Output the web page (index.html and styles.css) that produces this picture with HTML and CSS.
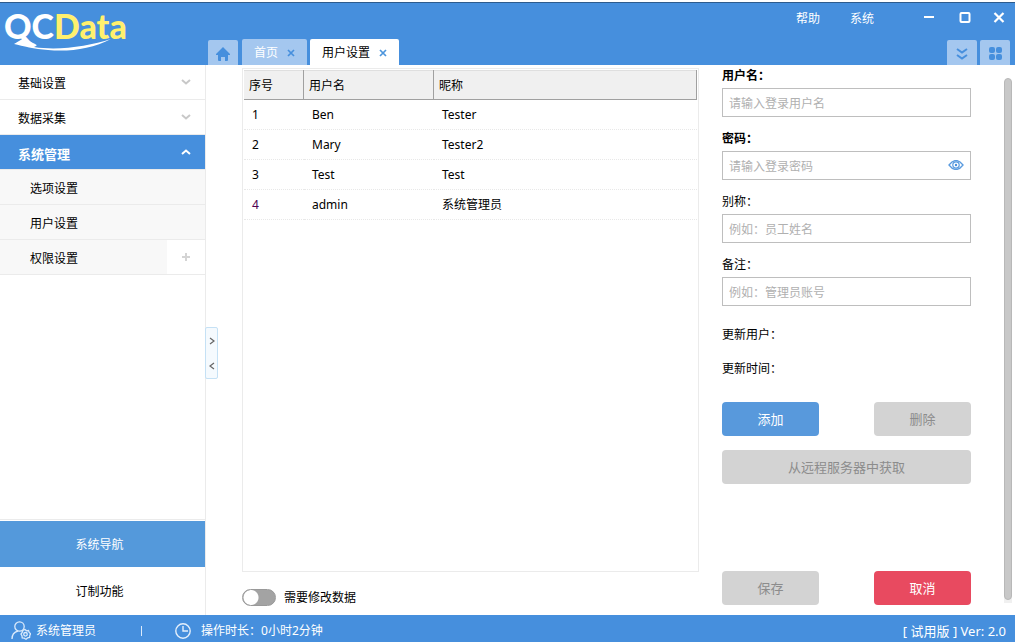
FILE: index.html
```html
<!DOCTYPE html>
<html lang="zh-CN">
<head>
<meta charset="utf-8">
<meta name="viewport" content="width=device-width, initial-scale=1">
<title>QCData</title>
<link rel="stylesheet" href="styles.css">
</head>
<body>
<div class="app">
  <header class="header">
    <div class="brand">
      <span class="brand-name">QC<span class="brand-data">Data</span></span>
      <svg class="brand-swoosh" width="98" height="13" viewBox="0 0 98 13" aria-hidden="true"><path d="M0 6 10 0l9 5c2 1 5 2 3 3l-2 1C45 13 75 8 97 1 78 11 55 14 34 12 20 11 9 8 0 6z" fill="#fff"/></svg>
    </div>
    <nav class="tabs">
      <button class="tab tab-home tab-first" type="button" aria-label="主页">
        <svg width="14" height="14" viewBox="0 0 14 14"><path d="M7 0 14 7v1h-2v5q0 1-1 1H9v-4H5v4H3q-1 0-1-1V8H0V7z" fill="#468fdd"/></svg>
      </button>
      <button class="tab tab-idle" type="button">首页
        <svg width="8" height="8" viewBox="0 0 8 8"><path d="M1 1 7 7M7 1 1 7" stroke="#468fdd" stroke-width="1.700"/></svg>
      </button>
      <button class="tab tab-active" type="button">用户设置
        <svg width="8" height="8" viewBox="0 0 8 8"><path d="M1 1 7 7M7 1 1 7" stroke="#4c95dd" stroke-width="1.700"/></svg>
      </button>
    </nav>
    <div class="header-right">
      <div class="window-bar">
        <button class="plain menu" type="button">帮助</button>
        <button class="plain menu" type="button">系统</button>
        <button class="plain minimize" type="button" aria-label="最小化"><svg width="12" height="12" viewBox="0 0 12 12"><path d="M1 5h10" stroke="#fff" stroke-width="2"/></svg></button>
        <button class="plain maximize" type="button" aria-label="最大化"><svg width="12" height="12" viewBox="0 0 12 12"><rect x="1.500" y="1" width="9" height="9" rx="1" fill="none" stroke="#fff" stroke-width="2"/></svg></button>
        <button class="plain close" type="button" aria-label="关闭"><svg width="12" height="12" viewBox="0 0 12 12"><path d="M1.500 1 10.500 10M10.500 1 1.500 10" stroke="#fff" stroke-width="2.200"/></svg></button>
      </div>
      <div class="tab-tools">
        <button class="tab tab-home" type="button" aria-label="展开"><svg width="12" height="12" viewBox="0 0 12 12"><path d="M1 1 6 4.500 11 1M1 7 6 10.500 11 7" fill="none" stroke="#468fdd" stroke-width="2"/></svg></button>
        <button class="tab tab-home" type="button" aria-label="窗口"><svg width="13" height="13" viewBox="0 0 13 13" fill="#468fdd"><rect width="6" height="6" rx="2"/><rect x="7" width="6" height="6" rx="2"/><rect y="7" width="6" height="6" rx="2"/><rect x="7" y="7" width="6" height="6" rx="2"/></svg></button>
      </div>
    </div>
  </header>

  <div class="body">
    <aside class="sidebar">
      <nav class="nav">
        <button class="nav-item" type="button">基础设置<svg class="chevron" width="10" height="6" viewBox="0 0 10 6"><path d="M1 1 5 4.500 9 1" fill="none" stroke="#c8c8c8" stroke-width="2"/></svg></button>
        <button class="nav-item" type="button">数据采集<svg class="chevron" width="10" height="6" viewBox="0 0 10 6"><path d="M1 1 5 4.500 9 1" fill="none" stroke="#c8c8c8" stroke-width="2"/></svg></button>
        <button class="nav-item nav-open" type="button">系统管理<svg class="chevron" width="10" height="6" viewBox="0 0 10 6"><path d="M1 5 5 1.500 9 5" fill="none" stroke="#fff" stroke-width="2"/></svg></button>
        <button class="nav-item nav-sub" type="button">选项设置</button>
        <button class="nav-item nav-sub" type="button">用户设置</button>
        <div class="nav-split">
          <button class="nav-item nav-sub" type="button">权限设置</button>
          <button class="plain nav-add" type="button" aria-label="添加"><svg width="8" height="8" viewBox="0 0 8 8"><path d="M4 0v8M0 4h8" stroke="#d4d4d4" stroke-width="2"/></svg></button>
        </div>
      </nav>
      <div class="switcher">
        <button class="switch-item switch-on" type="button">系统导航</button>
        <button class="switch-item" type="button">订制功能</button>
      </div>
      <div class="splitter">
        <svg width="6" height="8" viewBox="0 0 6 8"><path d="M1 1 5 4 1 7" fill="none" stroke="#666" stroke-width="1.200"/></svg>
        <svg width="6" height="8" viewBox="0 0 6 8"><path d="M5 1 1 4 5 7" fill="none" stroke="#666" stroke-width="1.200"/></svg>
      </div>
    </aside>

    <main class="list">
      <div class="grid-panel">
        <table class="grid">
          <colgroup><col class="col-no"><col class="col-user"><col></colgroup>
          <thead><tr><th>序号</th><th>用户名</th><th>昵称</th></tr></thead>
          <tbody>
            <tr><td>1</td><td>Ben</td><td>Tester</td></tr>
            <tr><td>2</td><td>Mary</td><td>Tester2</td></tr>
            <tr><td>3</td><td>Test</td><td>Test</td></tr>
            <tr><td class="current">4</td><td>admin</td><td>系统管理员</td></tr>
          </tbody>
        </table>
      </div>
      <label class="toggle"><input class="toggle-box" type="checkbox"><span class="toggle-text">需要修改数据</span></label>
    </main>

    <form class="form">
      <div class="fields">
        <div class="field"><label class="label strong" for="user">用户名：</label><input class="input" id="user" type="text" placeholder="请输入登录用户名"></div>
        <div class="field"><label class="label strong" for="pass">密码：</label>
          <div class="pass">
            <input class="input" id="pass" type="password" placeholder="请输入登录密码">
            <button class="plain eye" type="button" aria-label="显示密码"><svg width="16" height="10" viewBox="0 0 16 10" fill="none" stroke="#5a9bdf"><path d="M1 5Q8-4 15 5 8 14 1 5z" stroke-width="1.300"/><circle cx="8" cy="5" r="3.200" stroke-width="1.200"/><circle cx="8" cy="5" r="1.200" fill="#468fdd" stroke="none"/></svg></button>
          </div>
        </div>
        <div class="field"><label class="label" for="nick">别称：</label><input class="input" id="nick" type="text" placeholder="例如：员工姓名"></div>
        <div class="field"><label class="label" for="note">备注：</label><input class="input" id="note" type="text" placeholder="例如：管理员账号"></div>
      </div>
      <div class="info">
        <div class="info-row">更新用户：</div>
        <div class="info-row">更新时间：</div>
      </div>
      <div class="actions">
        <button class="btn btn-add" type="button">添加</button>
        <button class="btn" type="button" disabled>删除</button>
        <button class="btn btn-wide" type="button" disabled>从远程服务器中获取</button>
      </div>
      <div class="actions actions-end">
        <button class="btn" type="button" disabled>保存</button>
        <button class="btn btn-cancel" type="button">取消</button>
      </div>
    </form>
    <div class="scroll"><div class="scroll-track"><div class="scroll-thumb"></div></div></div>
  </div>

  <footer class="footer">
    <svg width="20" height="19" viewBox="0 0 20 19" fill="none" stroke="#dbeafb" stroke-width="1.300"><circle cx="8.500" cy="5.500" r="4.700"/><path d="M1 18c0-5 2-7 6-8"/><path d="m14 8.500 1.500 1.300 2-.3.700 1.900 1.400 1.300-.8 1.800-.2 2-2 .4-1.600 1.300-1.800-1-2-.3-.2-2L10 13l1.200-1.600.6-1.900z"/><circle cx="14.500" cy="13.300" r="1.800"/></svg>
    <span class="footer-user">系统管理员</span>
    <span class="footer-bar"></span>
    <svg width="16" height="16" viewBox="0 0 16 16" fill="none" stroke="#e4effb" stroke-width="1.400"><circle cx="8" cy="8" r="7.200"/><path d="M8 3v5h5"/></svg>
    <span class="footer-time">操作时长：0小时2分钟</span>
    <span class="footer-version">[ 试用版 ] Ver: 2.0</span>
  </footer>
</div>
</body>
</html>
```

FILE: styles.css
```css
* { box-sizing: border-box; }

body {
  margin: 0;
  font: 12px/18px "Noto Sans", "Noto Sans CJK SC", sans-serif;
  color: #000;
  background: #fff;
}

button, input { font: inherit; color: inherit; }
button { margin: 0; padding: 0; border: 0; }
svg { display: block; flex: none; }

.app { display: flex; flex-direction: column; height: 100vh; }
.plain { background: none; display: flex; align-items: center; justify-content: center; }

/* Header */
.header {
  display: flex;
  height: 65px;
  border-top: 2px solid #fff;
  background: #468fdd;
  box-shadow: inset 0 1px #2d5b8d;
}
.brand { position: relative; width: 208px; padding: 4px 0 0 4px; color: #fff; }
.brand-name { font: 900 34px/40px Lato, sans-serif; }
.brand-data { color: #fff06e; }
.brand-swoosh { position: absolute; left: 14px; top: 36px; }
.tabs { display: flex; align-items: flex-end; gap: 3px; }
.tab {
  display: flex;
  align-items: center;
  justify-content: center;
  gap: 9px;
  height: 26px;
  padding-top: 2px;
  border-radius: 2px 2px 0 0;
  background: #a4c7ef;
}
.tab-home { width: 30px; height: 25px; }
.tab-first { margin-right: 1px; }
.tab-idle { width: 65px; color: #fff; }
.tab-active { width: 89px; background: #fff; }
.header-right { display: flex; flex-direction: column; justify-content: space-between; align-items: flex-end; margin-left: auto; }
.window-bar { display: flex; align-items: center; padding: 6px 10px 0 0; color: #fff; }
.menu { width: 24px; height: 20px; margin-right: 30px; padding-top: 1px; }
.minimize { margin: 0 24px 0 19px; }
.maximize { margin-right: 22px; }
.tab-tools { display: flex; gap: 3px; padding-right: 5px; }

/* Body */
.body { display: flex; flex: 1; min-height: 0; }
.sidebar {
  position: relative;
  display: flex;
  flex-direction: column;
  justify-content: space-between;
  flex: none;
  width: 206px;
  border-right: 1px solid #ebebeb;
}
.nav { display: flex; flex-direction: column; }
.nav-item {
  display: flex;
  align-items: center;
  justify-content: space-between;
  height: 35px;
  padding: 3px 14px 0 18px;
  border-bottom: 1px solid #ebebeb;
  background: #fff;
}
.chevron { margin-bottom: 3px; }
.nav-open { color: #fff; font-weight: 700; font-size: 13px; background: #468fdd; }
.nav-sub { flex: 1 0 auto; padding-left: 30px; background: #f8f8f8; }
.nav-split { display: flex; }
.nav-add { width: 38px; border-bottom: 1px solid #ebebeb; }
.switcher { display: flex; flex-direction: column; padding-top: 1px; border-top: 1px solid #ebebeb; }
.switch-item { height: 48px; padding: 2px 6px 0 0; background: #fff; }
.switch-on { height: 46px; color: #fff; background: #5499db; }
.splitter {
  position: absolute;
  left: 205px;
  top: 262px;
  display: flex;
  flex-direction: column;
  align-items: center;
  justify-content: space-around;
  width: 13px;
  height: 52px;
  border: 1px solid #c5e1f5;
  border-radius: 2px;
  background: #f5fafe;
}

/* User list */
.list { display: flex; flex-direction: column; flex: 1; padding: 3px 0 8px 36px; }
.grid-panel { flex: 1; padding: 1px; border: 1px solid #ebebeb; }
.grid { width: 100%; table-layout: fixed; border-collapse: separate; border-spacing: 0; }
.col-no { width: 60px; }
.col-user { width: 130px; }
.grid th {
  height: 30px;
  padding: 2px 5px 0;
  border: solid #a0a0a0;
  border-width: 0 1px 1px 0;
  background: #f0f0f0;
  box-shadow: inset 0 1px #dfdfdf;
  font-weight: 400;
  text-align: left;
}
.grid td { height: 30px; padding: 0 8px; border-bottom: 1px dotted #e8e8e8; }
.grid .current { color: #500050; }
.toggle { display: flex; align-items: center; gap: 8px; margin-top: 15px; }
.toggle-text { padding-top: 2px; }
.toggle-box {
  appearance: none;
  width: 34px;
  height: 17px;
  margin: 0;
  border: 1px solid #999;
  border-radius: 9px;
  background: radial-gradient(circle at 8px 50%, #fff 7px, #a3a3a3 8px);
}

/* Form */
.form { display: flex; flex-direction: column; flex: none; width: 272px; padding: 2px 0 10px 23px; }
.fields { display: flex; flex-direction: column; gap: 13px; }
.field { display: flex; flex-direction: column; gap: 3px; }
.strong { font-weight: 700; }
.input {
  width: 100%;
  height: 29px;
  padding: 1px 6px 0;
  border: 1px solid #bebebe;
  border-radius: 0;
  background: #fff;
}
.input::placeholder { color: #b0b0b0; }
.pass { position: relative; }
.eye { position: absolute; right: 7px; top: 9px; }
.info { margin: 12px 0 16px; }
.info-row { line-height: 34px; }
.actions { display: grid; grid-template-columns: 97px 97px; justify-content: space-between; gap: 14px 0; }
.actions-end { margin-top: auto; }
.btn { height: 34px; border-radius: 4px; background: #d3d3d3; color: #8c8c8c; font-size: 13px; }
.btn-wide { grid-column: 1 / -1; }
.btn-add { color: #fff; background: #5899dc; }
.btn-cancel { color: #fff; background: #e84a60; }
.scroll { display: flex; width: 44px; padding: 13px 3px 12px 33px; }
.scroll-track { display: flex; flex: 1; padding-bottom: 3px; background: linear-gradient(transparent 50%, #f0f0f0 50%); }
.scroll-thumb { flex: 1; border: 1px solid #b8b8b8; border-radius: 4px; background: #c8c8c8; }

/* Status bar */
.footer {
  display: flex;
  align-items: center;
  flex: none;
  height: 27px;
  padding: 4px 9px 0 11px;
  color: #fff;
  background: #468fdd;
}
.footer-user { margin-left: 5px; }
.footer-bar { width: 1px; height: 10px; margin: 0 33px 0 45px; background: #dbeafb; }
.footer-time { margin-left: 10px; }
.footer-version { margin-left: auto; font-size: 13px; }
```
